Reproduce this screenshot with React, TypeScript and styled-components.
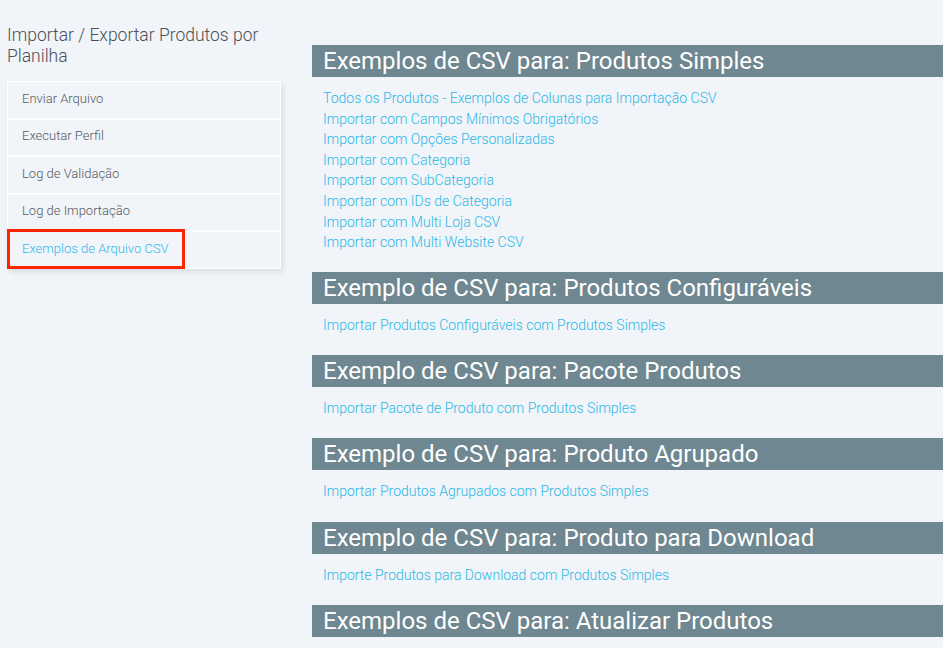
import React from 'react';
import styled, { createGlobalStyle } from 'styled-components';

const GlobalStyle = createGlobalStyle`
  html, body {
    margin: 0;
    padding: 0;
    background: #f1f4f9;
    font-family: Roboto, "Open Sans", "Liberation Sans", sans-serif;
    overflow: hidden;
  }
`;

interface Section {
  title: string;
  links: string[];
}

const SECTIONS: Section[] = [
  {
    title: 'Exemplos de CSV para: Produtos Simples',
    links: [
      'Todos os Produtos - Exemplos de Colunas para Importação CSV',
      'Importar com Campos Mínimos Obrigatórios',
      'Importar com Opções Personalizadas',
      'Importar com Categoria',
      'Importar com SubCategoria',
      'Importar com IDs de Categoria',
      'Importar com Multi Loja CSV',
      'Importar com Multi Website CSV',
    ],
  },
  {
    title: 'Exemplo de CSV para: Produtos Configuráveis',
    links: ['Importar Produtos Configuráveis com Produtos Simples'],
  },
  {
    title: 'Exemplo de CSV para: Pacote Produtos',
    links: ['Importar Pacote de Produto com Produtos Simples'],
  },
  {
    title: 'Exemplo de CSV para: Produto Agrupado',
    links: ['Importar Produtos Agrupados com Produtos Simples'],
  },
  {
    title: 'Exemplo de CSV para: Produto para Download',
    links: ['Importe Produtos para Download com Produtos Simples'],
  },
  {
    title: 'Exemplos de CSV para: Atualizar Produtos',
    links: [],
  },
];

const MENU = [
  'Enviar Arquivo',
  'Executar Perfil',
  'Log de Validação',
  'Log de Importação',
  'Exemplos de Arquivo CSV',
];

const Page = styled.div`
  display: flex;
  gap: 31px;
  padding: 25px 0 0 7px;
  width: 943px;
  height: 648px;
  box-sizing: border-box;
`;

const Sidebar = styled.aside`
  width: 274px;
  flex-shrink: 0;
`;

const SidebarTitle = styled.h2`
  margin: 0 0 14px;
  font-size: 17.5px;
  line-height: 21px;
  font-weight: 300;
  color: #4a5056;
`;

const Menu = styled.ul`
  list-style: none;
  margin: 0;
  padding: 0;
  border: 1px solid #ffffff;
  box-shadow: 2px 3px 6px rgba(0, 0, 0, 0.1);
`;

const MenuItem = styled.li<{ active?: boolean }>`
  position: relative;
  height: 35.5px;
  box-sizing: border-box;
  display: flex;
  align-items: center;
  padding: 0 0 3px 14px;
  font-size: 13px;
  font-weight: 300;
  color: ${p => (p.active ? '#2fb9e8' : '#555a60')};
  & + & {
    border-top: 2px solid #ffffff;
    height: 37.5px;
  }
`;

const Highlight = styled.span`
  position: absolute;
  left: -1px;
  top: -3px;
  width: 178px;
  height: 40px;
  border: 3px solid #ff2400;
  box-sizing: border-box;
`;

const Main = styled.main`
  flex: 1;
  padding-top: 20px;
`;

const SectionBlock = styled.section`
  margin-bottom: 19.5px;
`;

const Bar = styled.h3`
  margin: 0;
  height: 32px;
  display: flex;
  align-items: center;
  padding-left: 11px;
  background: #6e8790;
  color: #ffffff;
  font-size: 24px;
  font-weight: 400;
  white-space: nowrap;
`;

const LinkList = styled.div`
  padding: 11px 0 0 11px;
  display: flex;
  flex-direction: column;
`;

const LinkItem = styled.a`
  font-size: 14px;
  line-height: 20.6px;
  font-weight: 300;
  color: #2cb8e6;
  text-decoration: none;
  white-space: nowrap;
`;

export default function App() {
  return (
    <>
      <GlobalStyle />
      <Page>
        <Sidebar>
          <SidebarTitle>
            Importar / Exportar Produtos por
            <br />
            Planilha
          </SidebarTitle>
          <Menu>
            {MENU.map((label, i) => {
              const active = i === MENU.length - 1;
              return (
                <MenuItem key={label} active={active}>
                  {label}
                  {active && <Highlight />}
                </MenuItem>
              );
            })}
          </Menu>
        </Sidebar>
        <Main>
          {SECTIONS.map(s => (
            <SectionBlock key={s.title}>
              <Bar>{s.title}</Bar>
              {s.links.length > 0 && (
                <LinkList>
                  {s.links.map(l => (
                    <LinkItem key={l} href="#">
                      {l}
                    </LinkItem>
                  ))}
                </LinkList>
              )}
            </SectionBlock>
          ))}
        </Main>
      </Page>
    </>
  );
}
